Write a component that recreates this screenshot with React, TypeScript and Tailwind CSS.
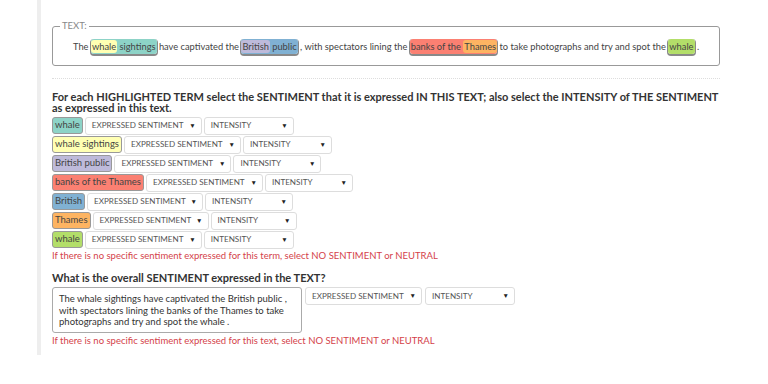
import React from "react";

// Set3 palette used for the highlighted terms
const terms = [
  { label: "whale", color: "bg-[#8dd3c7]", w: "w-[117px]", iw: "w-[90px]" },
  { label: "whale sightings", color: "bg-[#ffffb3]", w: "w-[117px]", iw: "w-[89px]" },
  { label: "British public", color: "bg-[#bebada]", w: "w-[117px]", iw: "w-[88px]" },
  { label: "banks of the Thames", color: "bg-[#fb8072]", w: "w-[117px]", iw: "w-[88px]" },
  { label: "British", color: "bg-[#80b1d3]", w: "w-[116px]", iw: "w-[88px]" },
  { label: "Thames", color: "bg-[#fdb462]", w: "w-[116px]", iw: "w-[86px]" },
  { label: "whale", color: "bg-[#b3de69]", w: "w-[117px]", iw: "w-[90px]" },
];

function Select({ label, className }: { label: string; className: string }) {
  return (
    <div
      className={`${className} h-[18px] flex items-center justify-between border border-[#ddd] rounded-[3px] bg-white pl-[6px] pr-[5px] text-[8.1px] text-[#555] uppercase whitespace-nowrap`}
    >
      <span>{label}</span>
      <span className="text-[6.5px] text-[#222]">▼</span>
    </div>
  );
}

function Mark({ color, children }: { color: string; children: React.ReactNode }) {
  return (
    <span
      className={`${color} rounded-[3px] px-[1px] py-[2px] shadow-[0_1px_0_1px_rgba(40,40,40,0.55)]`}
    >
      {children}
    </span>
  );
}

export default function App() {
  return (
    <div
      className="w-[768px] h-[384px] bg-white pl-[37px] overflow-hidden"
      style={{ fontFamily: "Lato, 'Open Sans', sans-serif" }}
    >
      <div className="border-l-[4px] border-[#eeeeee] h-[355px] pt-[20px] pl-[11px] pr-[48px] text-[#333]">
        {/* Text box */}
        <fieldset className="border border-[#999] rounded-[3px] h-[46px] px-[6px] pb-[6px]">
          <legend className="px-[2px] ml-[1px] text-[9.5px] text-[#888] leading-[12px]">TEXT:</legend>
          <p className="text-[9.3px] text-[#444] leading-[14px] pt-[8px] pl-[14px] whitespace-nowrap">
            The{" "}
            <span className="bg-[#8dd3c7] rounded-[3px] py-[2px] pr-[1px] shadow-[0_1px_0_1px_rgba(40,40,40,0.55)]">
              <span className="bg-[#ffffb3] rounded-[3px] px-[1px] py-[1px]">whale</span> sightings
            </span>{" "}
            have captivated the{" "}
            <span className="bg-[#80b1d3] rounded-[3px] py-[2px] pr-[1px] shadow-[0_1px_0_1px_rgba(40,40,40,0.55)]">
              <span className="bg-[#bebada] rounded-[3px] px-[1px] py-[1px]">British</span> public
            </span>{" "}
            , with spectators lining the{" "}
            <span className="bg-[#fb8072] rounded-[3px] py-[2px] pl-[1px] shadow-[0_1px_0_1px_rgba(40,40,40,0.55)]">
              banks of the <span className="bg-[#fdb462] rounded-[3px] px-[1px] py-[1px]">Thames</span>
            </span>{" "}
            to take photographs and try and spot the <Mark color="bg-[#b3de69]">whale</Mark> .
          </p>
        </fieldset>

        <div className="mt-[12px] border-t border-dotted border-[#ddd]" />

        <h3 className="mt-[12px] text-[11px] font-bold leading-[11px] text-[#333]">
          For each HIGHLIGHTED TERM select the SENTIMENT that it is expressed IN THIS TEXT; also select the INTENSITY of THE SENTIMENT as expressed in this text.
        </h3>

        <div className="mt-[4px] flex flex-col gap-[2px]">
          {terms.map((t, i) => (
            <div key={i} className="flex items-center gap-[2px] h-[17px]">
              <span
                className={`${t.color} h-[17px] flex items-center border border-[#999] rounded-[3px] px-[2px] text-[9.5px] text-[#444] whitespace-nowrap`}
              >
                {t.label}
              </span>
              <Select label="Expressed sentiment" className={t.w} />
              <Select label="Intensity" className={t.iw} />
            </div>
          ))}
        </div>

        <p className="mt-[2px] text-[9.5px] text-[#d43f4a] leading-[12px]">
          If there is no specific sentiment expressed for this term, select NO SENTIMENT or NEUTRAL
        </p>

        <h3 className="mt-[10px] text-[11px] font-bold leading-[12px] text-[#333]">
          What is the overall SENTIMENT expressed in the TEXT?
        </h3>

        <div className="mt-[3px] flex items-start gap-[3px]">
          <div className="w-[250px] h-[46px] border border-[#aaa] rounded-[3px] px-[6px] pt-[5px] text-[9.5px] leading-[11.5px] text-[#333]">
            The whale sightings have captivated the British public , with spectators lining the banks of the Thames to take photographs and try and spot the whale .
          </div>
          <Select label="Expressed sentiment" className="w-[117px]" />
          <Select label="Intensity" className="w-[90px]" />
        </div>

        <p className="mt-[2px] text-[9.5px] text-[#d43f4a] leading-[12px]">
          If there is no specific sentiment expressed for this text, select NO SENTIMENT or NEUTRAL
        </p>
      </div>
    </div>
  );
}
